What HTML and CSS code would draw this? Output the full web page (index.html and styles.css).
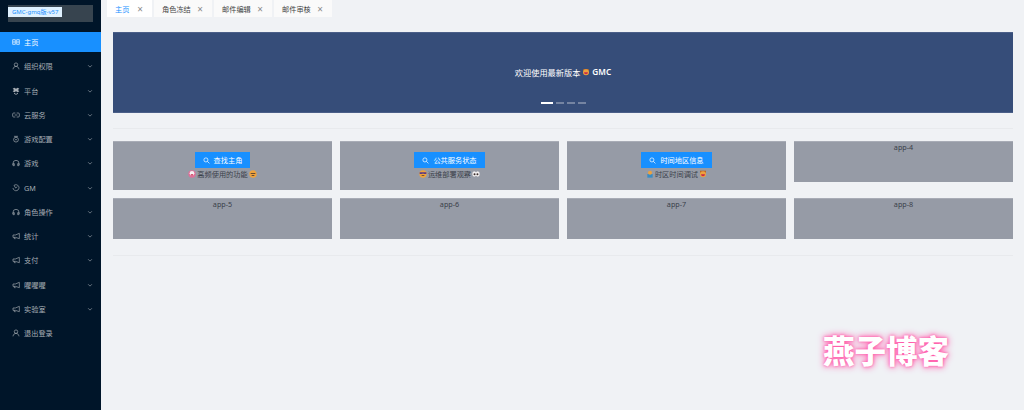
FILE: index.html

```html
<!DOCTYPE html>
<html lang="zh-CN">
<head>
  <meta charset="UTF-8" />
  <meta name="viewport" content="width=device-width, initial-scale=1.0"/>
  <title>GMC</title>
  <link rel="stylesheet" href="styles.css">
</head>
<body>
  <div class="layout">
    <aside class="sider">
      <div class="logo"><span class="logo-text">GMC-gmq版-v57</span></div>
      <ul class="menu">
        <li class="menu-item active">
          <svg class="icon" viewBox="0 0 12 12"><path d="M1 2.500h4v7H1zM7 2.500h4v7H7zM1 6h4M7 6h4"/></svg>
          <span class="label">主页</span>
        </li>
        <li class="menu-item">
          <svg class="icon" viewBox="0 0 12 12"><circle cx="6" cy="4" r="2.600"/><path d="M1.500 11c.4-3 2.200-4.400 4.500-4.400s4.100 1.400 4.500 4.400"/></svg>
          <span class="label">组织权限</span>
          <svg class="arrow" viewBox="0 0 8 8"><path d="M1.500 3l2.500 2.500L6.500 3"/></svg>
        </li>
        <li class="menu-item">
          <svg class="icon solid" viewBox="0 0 12 12"><path d="M1 2.500l2.500-1.500L6 2.500 8.500 1 11 2.500 8.800 4.500 11 6.500 8.500 8 6 6.500 3.500 8 1 6.500 3.200 4.500zM3 8.800l3 1.700 3-1.700v1.200L6 11.500 3 10z"/></svg>
          <span class="label">平台</span>
          <svg class="arrow" viewBox="0 0 8 8"><path d="M1.500 3l2.500 2.500L6.500 3"/></svg>
        </li>
        <li class="menu-item">
          <svg class="icon" viewBox="0 0 12 12"><path d="M5 3H2.500A1.500 1.500 0 0 0 1 4.500v3A1.500 1.500 0 0 0 2.500 9H5M7 3h2.500A1.500 1.500 0 0 1 11 4.500v3A1.500 1.500 0 0 1 9.500 9H7M4 6h4"/></svg>
          <span class="label">云服务</span>
          <svg class="arrow" viewBox="0 0 8 8"><path d="M1.500 3l2.500 2.500L6.500 3"/></svg>
        </li>
        <li class="menu-item">
          <svg class="icon" viewBox="0 0 12 12"><circle cx="6" cy="7" r="3.600"/><path d="M3 2h6M6 2v1.500M4.500 7h3"/></svg>
          <span class="label">游戏配置</span>
          <svg class="arrow" viewBox="0 0 8 8"><path d="M1.500 3l2.500 2.500L6.500 3"/></svg>
        </li>
        <li class="menu-item">
          <svg class="icon" viewBox="0 0 12 12"><path d="M1.500 9V6.500a4.500 4.500 0 0 1 9 0V9M1.500 7h2v3h-2zM8.500 7h2v3h-2z"/></svg>
          <span class="label">游戏</span>
          <svg class="arrow" viewBox="0 0 8 8"><path d="M1.500 3l2.500 2.500L6.500 3"/></svg>
        </li>
        <li class="menu-item">
          <svg class="icon" viewBox="0 0 12 12"><path d="M3 2.200A4.500 4.500 0 1 1 1.500 6M3 2.200L5.500 6 8 4"/></svg>
          <span class="label">GM</span>
          <svg class="arrow" viewBox="0 0 8 8"><path d="M1.500 3l2.500 2.500L6.500 3"/></svg>
        </li>
        <li class="menu-item">
          <svg class="icon" viewBox="0 0 12 12"><path d="M1.500 9V6.500a4.500 4.500 0 0 1 9 0V9M1.500 7h2v3h-2zM8.500 7h2v3h-2z"/></svg>
          <span class="label">角色操作</span>
          <svg class="arrow" viewBox="0 0 8 8"><path d="M1.500 3l2.500 2.500L6.500 3"/></svg>
        </li>
        <li class="menu-item">
          <svg class="icon" viewBox="0 0 12 12"><path d="M11 2v8L5 8H1.500V4.500H5zM3.500 8v2h2"/></svg>
          <span class="label">统计</span>
          <svg class="arrow" viewBox="0 0 8 8"><path d="M1.500 3l2.500 2.500L6.500 3"/></svg>
        </li>
        <li class="menu-item">
          <svg class="icon" viewBox="0 0 12 12"><path d="M11 2v8L5 8H1.500V4.500H5zM3.500 8v2h2"/></svg>
          <span class="label">支付</span>
          <svg class="arrow" viewBox="0 0 8 8"><path d="M1.500 3l2.500 2.500L6.500 3"/></svg>
        </li>
        <li class="menu-item">
          <svg class="icon" viewBox="0 0 12 12"><path d="M11 2v8L5 8H1.500V4.500H5zM3.500 8v2h2"/></svg>
          <span class="label">喔喔喔</span>
          <svg class="arrow" viewBox="0 0 8 8"><path d="M1.500 3l2.500 2.500L6.500 3"/></svg>
        </li>
        <li class="menu-item">
          <svg class="icon" viewBox="0 0 12 12"><path d="M11 2v8L5 8H1.500V4.500H5zM3.500 8v2h2"/></svg>
          <span class="label">实验室</span>
          <svg class="arrow" viewBox="0 0 8 8"><path d="M1.500 3l2.500 2.500L6.500 3"/></svg>
        </li>
        <li class="menu-item">
          <svg class="icon" viewBox="0 0 12 12"><circle cx="6" cy="4" r="2.600"/><path d="M1.500 11c.4-3 2.200-4.400 4.500-4.400s4.100 1.400 4.500 4.400"/></svg>
          <span class="label">退出登录</span>
        </li>
      </ul>
    </aside>

    <div class="main">
      <div class="tabs">
        <div class="tab current"><span>主页</span><span class="close">×</span></div>
        <div class="tab"><span>角色冻结</span><span class="close">×</span></div>
        <div class="tab"><span>邮件编辑</span><span class="close">×</span></div>
        <div class="tab"><span>邮件审核</span><span class="close">×</span></div>
      </div>

      <div class="content">
        <div class="banner">
          <p class="banner-text">欢迎使用最新版本
            <svg class="emoji" viewBox="0 0 12 12"><path class="e-hat" d="M2 1.500h8V5H2z"/><circle class="e-skin" cx="6" cy="6.500" r="4.500"/><path class="e-mouth" d="M3 6.500h6a3 3 0 0 1-6 0z"/></svg>
            <b>GMC</b></p>
          <div class="dots">
            <span class="dot on"></span><span class="dot"></span><span class="dot"></span><span class="dot"></span>
          </div>
        </div>

        <hr class="line first">

        <div class="grid">
          <div class="card">
            <button class="btn">
              <svg class="search" viewBox="0 0 12 12"><circle cx="5" cy="5" r="3.500"/><path d="M7.600 7.600L11 11"/></svg>查找主角
            </button>
            <p class="note">
              <svg class="emoji" viewBox="0 0 12 12"><circle class="e-pink" cx="6" cy="6" r="5.500"/><circle class="e-white" cx="6" cy="5" r="3.500"/><path class="e-mouth" d="M4 6.500h4a2 2 0 0 1-4 0z"/></svg>高频使用的功能<svg class="emoji" viewBox="0 0 12 12"><circle class="e-skin" cx="6" cy="6" r="5.500"/><path class="e-dark" d="M2.500 5h7v1h-7zM4 8h4v1H4z"/></svg>
            </p>
          </div>
          <div class="card">
            <button class="btn">
              <svg class="search" viewBox="0 0 12 12"><circle cx="5" cy="5" r="3.500"/><path d="M7.600 7.600L11 11"/></svg>公共服务状态
            </button>
            <p class="note">
              <svg class="emoji" viewBox="0 0 12 12"><circle class="e-skin" cx="6" cy="6" r="5.500"/><path class="e-purple" d="M1 3.500h10v2.500H7L6 5 5 6H1z"/><path class="e-dark" d="M4 8h4v1H4z"/></svg>运维部署观察<svg class="emoji" viewBox="0 0 12 12"><ellipse class="e-white" cx="3.500" cy="6" rx="3" ry="4"/><ellipse class="e-white" cx="8.500" cy="6" rx="3" ry="4"/><circle class="e-dark" cx="3.800" cy="6.500" r="1.500"/><circle class="e-dark" cx="8.200" cy="6.500" r="1.500"/></svg>
            </p>
          </div>
          <div class="card">
            <button class="btn">
              <svg class="search" viewBox="0 0 12 12"><circle cx="5" cy="5" r="3.500"/><path d="M7.600 7.600L11 11"/></svg>时间地区信息
            </button>
            <p class="note">
              <svg class="emoji" viewBox="0 0 12 12"><path class="e-blue" d="M2 6h8v5.500H2z"/><circle class="e-skin" cx="6" cy="4" r="3"/></svg>时区时间调试<svg class="emoji" viewBox="0 0 12 12"><path class="e-hat" d="M1.500 1h9v4h-9z"/><circle class="e-skin" cx="6" cy="6.500" r="4.500"/><path class="e-mouth" d="M3 6.500h6a3 3 0 0 1-6 0z"/></svg>
            </p>
          </div>
          <div class="card small">app-4</div>
          <div class="card small">app-5</div>
          <div class="card small">app-6</div>
          <div class="card small">app-7</div>
          <div class="card small">app-8</div>
        </div>

        <hr class="line second">
      </div>
    </div>
  </div>

  <div class="watermark">燕子博客</div>
</body>
</html>
```

FILE: styles.css

```css
* {
  box-sizing: border-box;
}
html, body {
  height: 100%;
}
body {
  margin: 0;
  overflow: hidden;
  background: #f0f2f5;
  color: #333;
  font-family: "Noto Sans", "Noto Sans CJK SC", sans-serif;
  font-size: 7.200px;
}
.layout {
  display: flex;
  height: 410px;
}

/* sidebar */
.sider {
  width: 101px;
  flex: none;
  background: #001529;
  color: #a6adb4;
}
.logo {
  height: 17px;
  margin: 5px 8px 10px;
  background: #37444f;
  padding-top: 2px;
}
.logo-text {
  display: block;
  width: 54px;
  height: 10px;
  background: #dff1ff;
  color: #1890ff;
  font-size: 6px;
  line-height: 10px;
  padding-left: 4px;
  white-space: nowrap;
}
.menu {
  list-style: none;
  margin: 0;
  padding: 0;
}
.menu-item {
  display: flex;
  align-items: center;
  height: 20px;
  margin-bottom: 4.250px;
  padding: 0 8px 0 12px;
}
.menu-item.active {
  background: #1890ff;
  color: #fff;
}
.icon {
  width: 8px;
  height: 8px;
  margin-right: 4px;
  fill: none;
  stroke: currentColor;
  stroke-width: 1;
}
.icon.solid {
  fill: currentColor;
  stroke: none;
}
.label {
  flex: 1;
  white-space: nowrap;
}
.arrow {
  width: 6px;
  height: 6px;
  fill: none;
  stroke: #8a939c;
  stroke-width: 1;
}

/* tabs */
.main {
  flex: 1;
  min-width: 0;
}
.tabs {
  display: flex;
  gap: 2px;
  height: 17px;
  padding-left: 6px;
}
.tab {
  display: flex;
  align-items: center;
  justify-content: space-between;
  width: 58px;
  padding: 0 9px 0 8px;
  background: #fafafa;
  color: #444;
}
.tab.current {
  width: 45px;
  background: #fff;
  color: #1890ff;
}
.close {
  color: #8c8c8c;
  font-size: 10px;
  line-height: 1;
}

/* page */
.content {
  padding: 15px 11px 0 12px;
}
.banner {
  position: relative;
  height: 81px;
  padding-bottom: 2px;
  background: #364d79;
  color: #fff;
  display: flex;
  align-items: center;
  justify-content: center;
  border: 1px solid #4b5f88;
  border-width: 1px 0;
}
.banner-text {
  margin: 0;
  font-size: 8.200px;
  display: flex;
  align-items: center;
  gap: 2px;
}
.banner-text b {
  font-weight: 600;
}
.dots {
  position: absolute;
  left: 0;
  right: 0;
  bottom: 8px;
  display: flex;
  justify-content: center;
  gap: 3px;
}
.dot {
  width: 8px;
  height: 2px;
  background: #7584a2;
}
.dot.on {
  width: 12px;
  background: #fff;
}
.line {
  margin: 0;
  border: 0;
  border-top: 1px solid #e8eaed;
}
.line.first {
  margin-top: 15px;
}
.line.second {
  margin-top: 16px;
}

/* app cards */
.grid {
  display: grid;
  grid-template-columns: repeat(4, 1fr);
  gap: 8px;
  align-items: start;
  margin-top: 12px;
}
.card {
  background: #969ba6;
  border-top: 1px solid #a8acb6;
  text-align: center;
  color: #3a3f4a;
  height: 49px;
  padding-top: 10px;
}
.card.small {
  height: 41px;
  padding-top: 0;
  line-height: 10px;
}
.btn {
  display: inline-flex;
  align-items: center;
  justify-content: center;
  gap: 4px;
  height: 16px;
  padding: 0 8px;
  border: 0;
  background: #1890ff;
  color: #fff;
  font: inherit;
}
.search {
  width: 7px;
  height: 7px;
  fill: none;
  stroke: #fff;
  stroke-width: 1.200;
}
.note {
  margin: 0;
  display: flex;
  align-items: center;
  justify-content: center;
  gap: 1px;
  line-height: 12px;
}
.emoji {
  width: 8px;
  height: 8px;
  flex: none;
}
.e-skin { fill: #eda23d; }
.e-hat { fill: #b5652a; }
.e-mouth { fill: #c92a4a; }
.e-pink { fill: #e0709a; }
.e-white { fill: #f4f1f1; }
.e-dark { fill: #3b2f2f; }
.e-purple { fill: #5b3a86; }
.e-blue { fill: #3a8cc4; }

.watermark {
  position: absolute;
  left: 823px;
  top: 329px;
  color: #fff;
  font-family: "Noto Sans CJK SC", sans-serif;
  font-size: 31.500px;
  font-weight: 900;
  line-height: 40px;
  white-space: nowrap;
  text-shadow: 0 0 3px #ff4fa3, 0 0 6px #ff6db5, 0 0 9px #ffa6d2;
}
```
